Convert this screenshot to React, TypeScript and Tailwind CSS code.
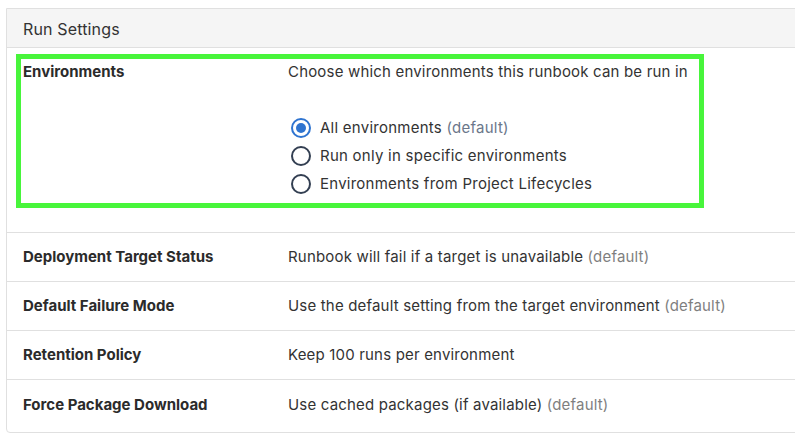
import React from "react";

const font = { fontFamily: "Inter, Roboto, 'Noto Sans', Arial, sans-serif" };

function Radio({ checked, children }: { checked?: boolean; children: React.ReactNode }) {
  return (
    <div className="flex h-[28px] items-center">
      <span
        className={
          "ml-[3px] flex h-[20px] w-[20px] items-center justify-center rounded-full border-2 " +
          (checked ? "border-[#2f74d0]" : "border-[#333f52]")
        }
      >
        {checked && <span className="block h-[10px] w-[10px] rounded-full bg-[#2f74d0]" />}
      </span>
      <span className="ml-[9px] text-[15px] leading-[20px] tracking-[0.25px] text-[#333333]">{children}</span>
    </div>
  );
}

function Row({ label, children, last }: { label: string; children: React.ReactNode; last?: boolean }) {
  return (
    <div
      className={
        "grid h-[49px] grid-cols-[265px_1fr] items-center pl-[16px] " +
        (last ? "" : "border-b border-[#e0e0e0]")
      }
    >
      <div className="text-[15px] font-bold leading-[20px] text-[#2b2b2b]">{label}</div>
      <div className="text-[15px] leading-[20px] tracking-[0.18px] text-[#333333]">{children}</div>
    </div>
  );
}

export default function App() {
  return (
    <div className="h-[439px] w-[795px] overflow-hidden bg-white pl-[6px] pt-[8px]" style={font}>
      <div className="w-[840px] rounded-b-[4px] border border-[#e0e0e0] pb-[3px]">
        <div className="flex h-[39px] items-center border-b border-[#e0e0e0] bg-[#f5f5f5] pl-[16px] pt-[2px] text-[16px] tracking-[0.15px] text-[#333333]">
          Run Settings
        </div>
        <div className="relative h-[185px] border-b border-[#e0e0e0]">
          <div className="grid grid-cols-[265px_1fr] pl-[16px] pt-[14px]">
            <div className="text-[15px] font-bold leading-[20px] text-[#2b2b2b]">Environments</div>
            <div>
              <div className="text-[15px] leading-[20px] tracking-[0.18px] text-[#333333]">
                Choose which environments this runbook can be run in
              </div>
              <div className="mt-[32px]">
                <Radio checked>
                  All environments <span className="text-[#6b778a]">(default)</span>
                </Radio>
                <Radio>Run only in specific environments</Radio>
                <Radio>Environments from Project Lifecycles</Radio>
              </div>
            </div>
          </div>
          <div className="pointer-events-none absolute left-[9px] top-[6px] h-[154px] w-[688px] border-[5px] border-[#48f53b]" />
        </div>
        <Row label="Deployment Target Status">
          Runbook will fail if a target is unavailable <span className="text-[#7f7f7f]">(default)</span>
        </Row>
        <Row label="Default Failure Mode">
          Use the default setting from the target environment <span className="text-[#7f7f7f]">(default)</span>
        </Row>
        <Row label="Retention Policy">Keep 100 runs per environment</Row>
        <Row label="Force Package Download" last>
          Use cached packages (if available) <span className="text-[#7f7f7f]">(default)</span>
        </Row>
      </div>
    </div>
  );
}
